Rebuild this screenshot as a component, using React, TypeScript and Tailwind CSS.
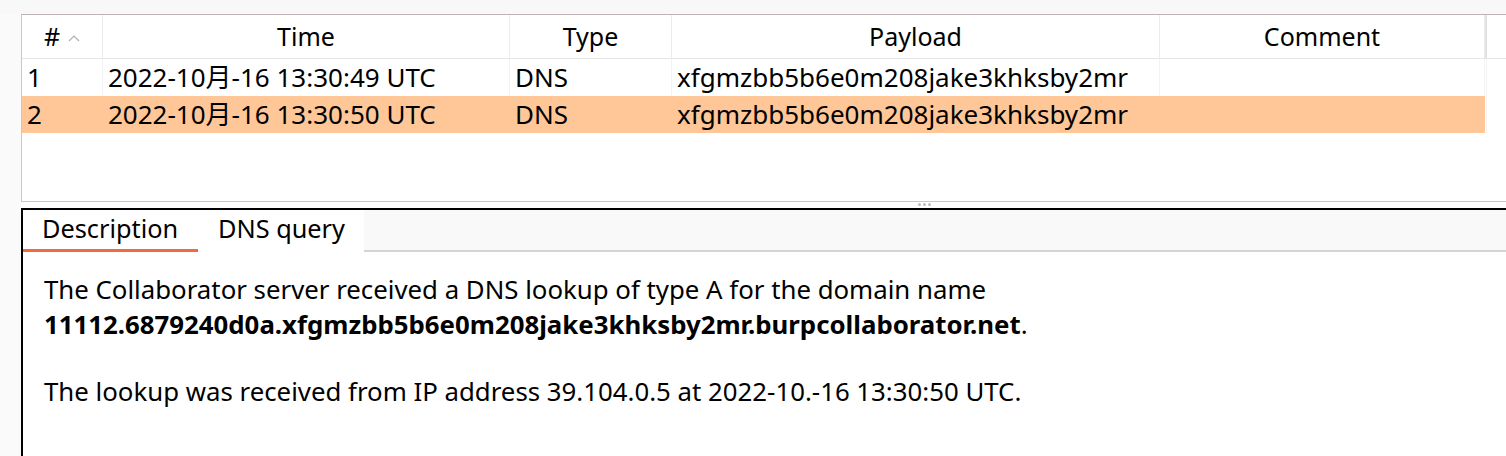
const cols = [
  { key: "num", label: "#", w: "w-[81px]" },
  { key: "time", label: "Time", w: "w-[407px]" },
  { key: "type", label: "Type", w: "w-[162px]" },
  { key: "payload", label: "Payload", w: "w-[488px]" },
  { key: "comment", label: "Comment", w: "w-[325px]" },
];

const rows = [
  { num: "1", time: "2022-10月-16 13:30:49 UTC", type: "DNS", payload: "xfgmzbb5b6e0m208jake3khksby2mr", comment: "", selected: false },
  { num: "2", time: "2022-10月-16 13:30:50 UTC", type: "DNS", payload: "xfgmzbb5b6e0m208jake3khksby2mr", comment: "", selected: true },
];

const font = "font-['Noto_Sans','Noto_Sans_CJK_SC',sans-serif]";

export default function App() {
  return (
    <div className={`w-[1506px] h-[456px] overflow-hidden bg-[#fafafa] text-black ${font}`}>
      <div className="h-[14px] bg-[#f8f8f8]" />
      {/* Interactions table */}
      <div className="ml-[21px] h-[188px] border-t border-l border-b border-t-[#bcb4b4] border-l-[#c8c8c8] border-b-[#c8c8c8] bg-white">
        <div className="flex h-[44px] border-b border-[#e6e6e6] text-[25px]">
          {cols.map((c) => (
            <div
              key={c.key}
              className={`${c.w} shrink-0 flex items-center justify-center border-r border-[#ececec]`}
            >
              {c.label}
              {c.key === "num" && (
                <svg width="12" height="8" viewBox="0 0 12 8" className="ml-[8px] mt-[2px]">
                  <path d="M1 7 L6 2 L11 7" fill="none" stroke="#b0b0b0" strokeWidth="1.2" />
                </svg>
              )}
            </div>
          ))}
          <div className="w-[2px] bg-[#e2e2e2]" />
          <div className="flex-1" />
        </div>
        {rows.map((r) => (
          <div key={r.num} className="flex h-[37px] text-[26px]">
            {cols.map((c) => (
              <div
                key={c.key}
                className={`${c.w} shrink-0 flex items-center pl-[5px] ${
                  r.selected ? "bg-[#ffc697]" : "border-r border-[#f3f3f3]"
                }`}
              >
                {(r as Record<string, string | boolean>)[c.key] as string}
              </div>
            ))}
            <div className="w-[2px] border-r border-[#f3f3f3]" />
          </div>
        ))}
      </div>
      {/* splitter */}
      <div className="ml-[21px] h-[6px] bg-white flex justify-center pl-[322px]">
        <div className="flex gap-[2px] pt-[1px]">
          <span className="w-[3px] h-[3px] rounded-full bg-[#bdbdbd]" />
          <span className="w-[3px] h-[3px] rounded-full bg-[#bdbdbd]" />
          <span className="w-[3px] h-[3px] rounded-full bg-[#bdbdbd]" />
        </div>
      </div>
      {/* Details panel */}
      <div className="ml-[21px] h-[248px] border-t-2 border-l-2 border-black bg-white">
        <div className="flex h-[42px]">
          <div className="flex">
            <div className="w-[175px] flex flex-col">
              <div className="h-[39px] flex items-center pl-[19px] pb-[3px] text-[25.3px] leading-[32px]">Description</div>
              <div className="h-[3px] bg-[#f26a3d]" />
            </div>
            <div className="w-[166px] flex items-center pl-[20px] pb-[4px] text-[25.3px] leading-[32px] border-b-2 border-white">DNS query</div>
          </div>
          <div className="flex-1 bg-[#f9f9f9] border-b-2 border-[#d4d4d4]" />
        </div>
        <div className="pl-[21px] pt-[20px] text-[25.8px] leading-[35px]">
          <p>
            The Collaborator server received a DNS lookup of type A for the domain name
            <br />
            <b>11112.6879240d0a.xfgmzbb5b6e0m208jake3khksby2mr.burpcollaborator.net</b>.
          </p>
          <p className="mt-[32px]">
            The lookup was received from IP address 39.104.0.5 at 2022-10.-16 13:30:50 UTC.
          </p>
        </div>
      </div>
    </div>
  );
}
